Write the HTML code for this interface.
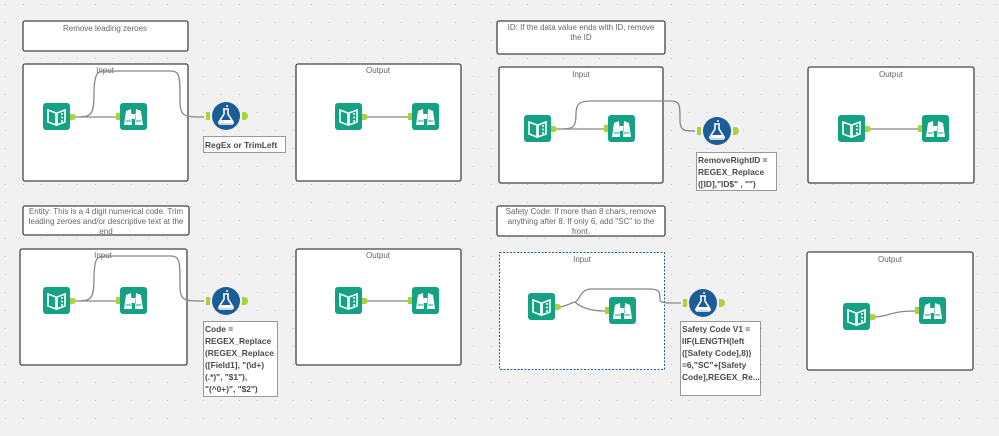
<!DOCTYPE html>
<html><head><meta charset="utf-8"><style>
html,body{margin:0;padding:0;background:#f1f1f1;}
svg{display:block;font-family:"Liberation Sans",sans-serif;}
</style></head><body>
<svg width="999" height="436" viewBox="0 0 999 436" xmlns="http://www.w3.org/2000/svg">
<defs>
<pattern id="dots" width="18" height="18" patternUnits="userSpaceOnUse" x="5" y="4">
<rect x="0" y="0" width="1" height="1" fill="#c4c4c4"/>
</pattern>
<g id="inp">
<path d="M0,3 a3,3 0 0 1 3,-3 h21 a3,3 0 0 1 3,3 v21 a3,3 0 0 1 -3,3 h-21 a3,3 0 0 1 -3,-3z" fill="#14a184"/>
<path d="M5,7 L13,10 L13,22 L5,19z M22,7 L14,10 L14,22 L22,19z" fill="none" stroke="#fff" stroke-width="1.6"/>
<circle cx="19" cy="11" r="1" fill="#fff"/><circle cx="19" cy="14.5" r="1" fill="#fff"/><circle cx="19" cy="18" r="1" fill="#fff"/>
<path d="M27,11 h3 a3,3 0 0 1 0,6 h-3z" fill="#a9d33c"/>
</g>
<g id="brw">
<path d="M-4,10 h4 v7 h-4z" fill="#a9d33c"/>
<path d="M0,3 a3,3 0 0 1 3,-3 h21 a3,3 0 0 1 3,3 v21 a3,3 0 0 1 -3,3 h-21 a3,3 0 0 1 -3,-3z" fill="#14a184"/>
<path d="M4,22 L6,8 L11,6 L12,22z M23,22 L21,8 L16,6 L15,22z M11,11 h5 v5 h-5z" fill="#fff"/>
<path d="M6,18 h5 M16,18 h5" stroke="#14a184" stroke-width="1"/>
</g>
<g id="frm">
<path d="M-6,10 h4 v8 h-4z" fill="#a9d33c"/>
<circle cx="14" cy="14" r="14" fill="#1b5d96"/>
<path d="M11,7 h6 M12,7 v5 L7,20 a1.5,1.5 0 0 0 1.3,2 h11.4 a1.5,1.5 0 0 0 1.3,-2 L16,12 v-5" fill="none" stroke="#fff" stroke-width="1.6"/>
<path d="M9,18 h10 l1.5,3 h-13z" fill="#fff"/>
<circle cx="15" cy="4" r="1" fill="#fff"/>
<path d="M30,10 h2 a4,4 0 0 1 0,8 h-2z" fill="#a9d33c"/>
</g>
</defs>
<rect width="999" height="436" fill="#f1f1f1"/>
<rect width="999" height="436" fill="url(#dots)"/>

<g fill="#fff" stroke="#444" stroke-width="1.3">
<rect x="23" y="21" width="165" height="30" rx="2"/>
<rect x="497" y="21" width="168" height="33" rx="2"/>
<rect x="23" y="206" width="166" height="29" rx="2"/>
<rect x="497" y="206" width="168" height="30" rx="2"/>
<rect x="23" y="64" width="165" height="117" rx="2"/>
<rect x="296" y="64" width="165" height="117" rx="2"/>
<rect x="499" y="67" width="164" height="116" rx="2"/>
<rect x="808" y="67" width="166" height="116" rx="2"/>
<rect x="20" y="249" width="167" height="116" rx="2"/>
<rect x="296" y="249" width="165" height="116" rx="2"/>
<rect x="807" y="252" width="166" height="118" rx="2"/>
</g>
<rect x="499.5" y="252.5" width="165" height="117" fill="#fff" stroke="#2b5a8f" stroke-width="1" stroke-dasharray="2,1.5"/>

<g font-size="8" fill="#666" text-anchor="middle">
<text x="105" y="31">Remove leading zeroes</text>
<text x="581" y="30">ID: If the data value ends with ID, remove</text>
<text x="581" y="40">the ID</text>
<text x="106" y="214">Entity: This is a 4 digit numerical code. Trim</text>
<text x="106" y="224">leading zeroes and/or descriptive text at the</text>
<text x="106" y="234">end</text>
<text x="581" y="214">Safety Code: If more than 8 chars, remove</text>
<text x="581" y="224">anything after 8. If only 6, add "SC" to the</text>
<text x="581" y="234">front.</text>
<text x="105" y="73">Input</text><text x="378" y="73">Output</text>
<text x="581" y="77">Input</text><text x="891" y="77">Output</text>
<text x="103" y="258">Input</text><text x="378" y="258">Output</text>
<text x="582" y="262">Input</text><text x="890" y="262">Output</text>
</g>

<g fill="none" stroke="#888" stroke-width="1.3">
<path d="M73,117 H116"/><path d="M80,117 C92,117 94,112 94,95 C94,70 98,71 110,71 H170 C180,71 180,76 180,100 C180,117 184,117 204,117"/>
<path d="M365,117 H408"/><path d="M868,129 H918"/>
<path d="M554,129 H604"/><path d="M562,129 C574,129 576,126 576,114 C576,103 580,101 592,101 H670 C680,101 680,104 680,120 C680,131 684,131 695,131"/>
<path d="M73,301 H116"/><path d="M80,301 C92,301 94,296 94,279 C94,255 98,256 110,256 H170 C180,256 180,261 180,285 C180,301 184,301 204,301"/>
<path d="M365,301 H408"/>
<path d="M558,307 C566,307 570,303 575,302 C580,307 590,311 605,311"/><path d="M575,302 C580,300 580,290 590,289 H650 C660,289 660,293 660,300 C660,303 665,303 681,303"/>
<path d="M873,317 C888,317 890,311 915,311"/>
</g>

<use href="#inp" x="43" y="103"/><use href="#brw" x="120" y="103"/><use href="#frm" x="212" y="102"/>
<use href="#inp" x="335" y="103"/><use href="#brw" x="412" y="103"/>
<use href="#inp" x="524" y="115"/><use href="#brw" x="608" y="115"/><use href="#frm" x="703" y="117"/>
<use href="#inp" x="838" y="115"/><use href="#brw" x="922" y="115"/>
<use href="#inp" x="43" y="287"/><use href="#brw" x="120" y="287"/><use href="#frm" x="212" y="287"/>
<use href="#inp" x="335" y="287"/><use href="#brw" x="412" y="287"/>
<use href="#inp" x="528" y="293"/><use href="#brw" x="609" y="297"/><use href="#frm" x="689" y="289"/>
<use href="#inp" x="843" y="303"/><use href="#brw" x="919" y="297"/>

<g fill="#fff" stroke="#999" stroke-width="1">
<rect x="203.5" y="136.5" width="82" height="16"/>
<rect x="696.5" y="152.5" width="80" height="38"/>
<rect x="203.5" y="321.5" width="74" height="75"/>
<rect x="680.5" y="321.5" width="80" height="74"/>
</g>
<g font-size="8.4" fill="#4a4a4a" font-weight="bold">
<text x="205" y="148">RegEx or TrimLeft</text>
<text x="698" y="163">RemoveRightID =</text>
<text x="698" y="175">REGEX_Replace</text>
<text x="698" y="187">([ID],"ID$" , "")</text>
<text x="205" y="332">Code =</text>
<text x="205" y="344">REGEX_Replace</text>
<text x="205" y="356">(REGEX_Replace</text>
<text x="205" y="368">([Field1], "(\d+)</text>
<text x="205" y="380">(.*)", "$1"),</text>
<text x="205" y="392">"(^0+)", "$2")</text>
<text x="682" y="332">Safety Code V1 =</text>
<text x="682" y="344">IIF(LENGTH(left</text>
<text x="682" y="356">([Safety Code],8))</text>
<text x="682" y="368">=6,"SC"+[Safety</text>
<text x="682" y="380">Code],REGEX_Re...</text>
</g>
</svg>
</body></html>
